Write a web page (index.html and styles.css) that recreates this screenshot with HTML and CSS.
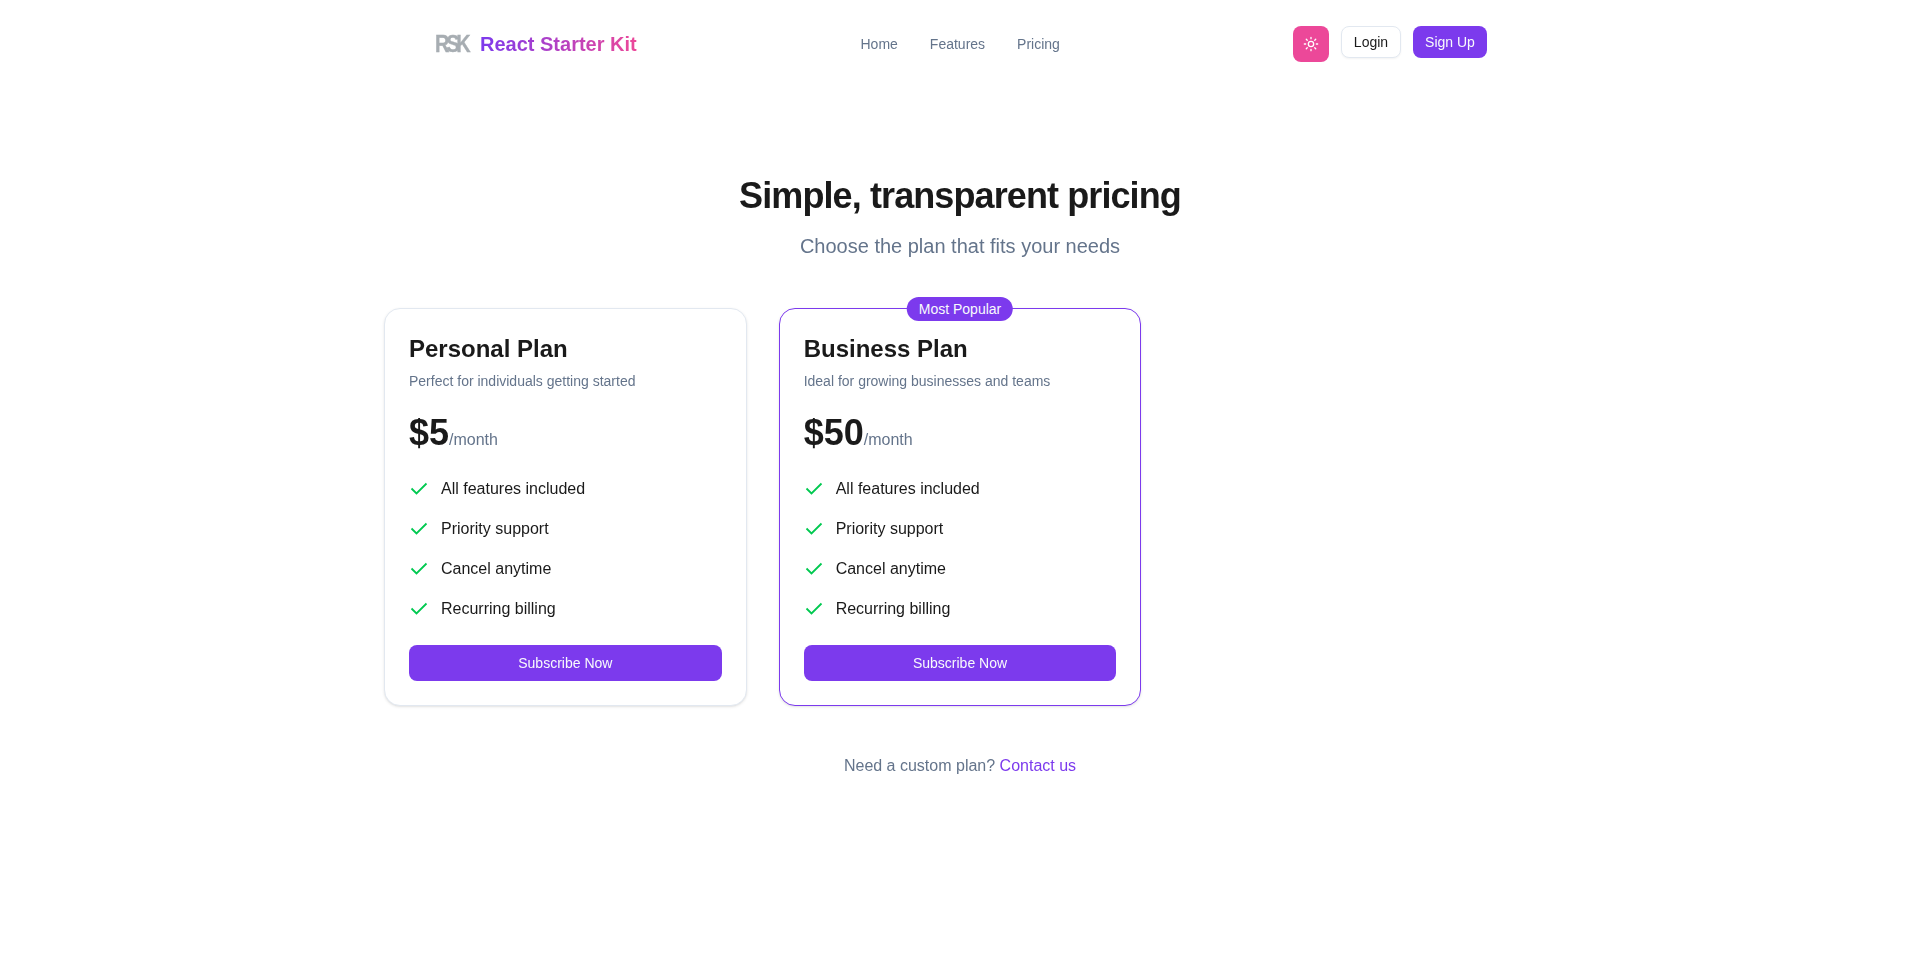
FILE: index.html

```html
<!DOCTYPE html>
<html lang="en">
<head>
  <meta charset="UTF-8" />
  <meta name="viewport" content="width=device-width, initial-scale=1.0"/>
  <title>Pricing - React Starter Kit</title>
  <link rel="stylesheet" href="styles.css">
</head>
<body>
  <header class="navbar">
    <a class="brand" href="#">
      <span class="brand-logo">RSK</span>
      <span class="brand-name">React Starter Kit</span>
    </a>
    <nav class="nav-links">
      <a href="#">Home</a>
      <a href="#">Features</a>
      <a href="#">Pricing</a>
    </nav>
    <div class="nav-actions">
      <button class="btn-theme" type="button" aria-label="Toggle theme">
        <svg width="16" height="16" viewBox="0 0 24 24" fill="none" stroke="currentColor" stroke-width="2" stroke-linecap="round" stroke-linejoin="round">
          <circle cx="12" cy="12" r="4"/>
          <path d="M12 2v2M12 20v2M4.93 4.93l1.41 1.41M17.66 17.66l1.41 1.41M2 12h2M20 12h2M6.34 17.66l-1.41 1.41M19.07 4.93l-1.41 1.41"/>
        </svg>
      </button>
      <button class="btn-login" type="button">Login</button>
      <button class="btn-signup" type="button">Sign Up</button>
    </div>
  </header>

  <main class="pricing">
    <h1>Simple, transparent pricing</h1>
    <p class="subtitle">Choose the plan that fits your needs</p>

    <div class="plans">
      <section class="plan">
        <h2>Personal Plan</h2>
        <p class="plan-desc">Perfect for individuals getting started</p>
        <p class="price"><strong>$5</strong><span>/month</span></p>
        <ul class="features">
          <li><svg class="check" viewBox="0 0 20 20"><path d="M2.5 9.5 7.5 14.5 17.5 4.5"/></svg>All features included</li>
          <li><svg class="check" viewBox="0 0 20 20"><path d="M2.5 9.5 7.5 14.5 17.5 4.5"/></svg>Priority support</li>
          <li><svg class="check" viewBox="0 0 20 20"><path d="M2.5 9.5 7.5 14.5 17.5 4.5"/></svg>Cancel anytime</li>
          <li><svg class="check" viewBox="0 0 20 20"><path d="M2.5 9.5 7.5 14.5 17.5 4.5"/></svg>Recurring billing</li>
        </ul>
        <button class="btn-subscribe" type="button">Subscribe Now</button>
      </section>

      <section class="plan plan-popular">
        <span class="badge">Most Popular</span>
        <h2>Business Plan</h2>
        <p class="plan-desc">Ideal for growing businesses and teams</p>
        <p class="price"><strong>$50</strong><span>/month</span></p>
        <ul class="features">
          <li><svg class="check" viewBox="0 0 20 20"><path d="M2.5 9.5 7.5 14.5 17.5 4.5"/></svg>All features included</li>
          <li><svg class="check" viewBox="0 0 20 20"><path d="M2.5 9.5 7.5 14.5 17.5 4.5"/></svg>Priority support</li>
          <li><svg class="check" viewBox="0 0 20 20"><path d="M2.5 9.5 7.5 14.5 17.5 4.5"/></svg>Cancel anytime</li>
          <li><svg class="check" viewBox="0 0 20 20"><path d="M2.5 9.5 7.5 14.5 17.5 4.5"/></svg>Recurring billing</li>
        </ul>
        <button class="btn-subscribe" type="button">Subscribe Now</button>
      </section>
    </div>

    <p class="custom">Need a custom plan? <a href="#">Contact us</a></p>
  </main>
</body>
</html>
```

FILE: styles.css

```css
* { box-sizing: border-box; }
body { margin: 0; background: #fff; color: #1a1a1a; font-family: "Liberation Sans", Arial, sans-serif; }
a { text-decoration: none; }
button { font-family: inherit; cursor: pointer; }

.navbar { width: 1052px; margin-left: 435px; padding-top: 26px; height: 88px; display: grid; grid-template-columns: 425.5px auto 1fr; align-items: start; will-change: opacity; }
.brand { display: flex; align-items: center; gap: 12px; height: 36px; }
.brand-logo { width: 33px; font-size: 23px; font-weight: 700; letter-spacing: -3.8px; color: #a7adb2; -webkit-text-stroke: .3px #a7adb2; transform: scaleX(.87); transform-origin: left center; filter: blur(.3px); }
.brand-name { font-size: 20px; font-weight: 700; background: linear-gradient(90deg, #7c3aed, #ec4899); -webkit-background-clip: text; background-clip: text; color: transparent; }
.nav-links { display: flex; gap: 32px; height: 36px; align-items: center; font-size: 14px; }
.nav-links a { color: #64748b; }
.nav-actions { display: flex; justify-content: flex-end; align-items: flex-start; gap: 12px; }
.btn-theme { width: 36px; height: 36px; padding: 0; display: flex; align-items: center; justify-content: center; background: #ec4899; color: #fff; border: 0; border-radius: 8px; }
.btn-login { height: 32px; width: 60px; padding: 0; font-size: 14px; background: #fff; color: #1a1a1a; border: 1px solid #e2e8f0; border-radius: 8px; box-shadow: 0 1px 2px rgba(0,0,0,.05); }
.btn-signup { height: 32px; width: 74px; padding: 0; font-size: 14px; background: #7c3aed; color: #f8fafc; border: 0; border-radius: 8px; }

.pricing { width: 1152px; margin: 0 auto; padding-top: 88px; text-align: center; will-change: opacity; }
h1 { margin: 0; font-size: 36px; line-height: 40px; font-weight: 700; letter-spacing: -.9px; }
.subtitle { margin: 16px 0 0; font-size: 20px; line-height: 28px; color: #64748b; }

.plans { margin-top: 48px; display: grid; grid-template-columns: repeat(3, 1fr); gap: 32px; text-align: left; }
.plan { position: relative; padding: 24px; border: 1px solid #e2e8f0; border-radius: 16px; background: #fff; box-shadow: 0 1px 3px rgba(0,0,0,.1), 0 1px 2px -1px rgba(0,0,0,.1); }
.plan-popular { border-color: #7c3aed; }
.badge { position: absolute; top: -12px; left: 50%; transform: translateX(-50%); height: 24px; padding: 0 12px; border-radius: 12px; background: #7c3aed; color: #f8fafc; font-size: 14px; line-height: 24px; white-space: nowrap; }
.plan h2 { margin: 0; font-size: 24px; line-height: 32px; font-weight: 700; }
.plan-desc { margin: 6px 0 0; font-size: 14px; line-height: 20px; color: #64748b; }
.price { margin: 22px 0 0; height: 40px; color: #64748b; font-size: 16px; line-height: 40px; }
.price strong { font-size: 36px; color: #1a1a1a; }
.features { list-style: none; margin: 24px 0 0; padding: 0; display: flex; flex-direction: column; gap: 16px; font-size: 16px; line-height: 24px; }
.features li { display: flex; align-items: center; gap: 12px; }
.check { width: 20px; height: 20px; fill: none; stroke: #00c950; stroke-width: 1.8; }
.btn-subscribe { display: block; width: 100%; height: 36px; margin-top: 24px; border: 0; border-radius: 8px; background: #7c3aed; color: #f8fafc; font-size: 14px; }

.custom { margin: 48px 0 0; font-size: 16px; line-height: 24px; color: #64748b; }
.custom a { color: #7c3aed; }
```
